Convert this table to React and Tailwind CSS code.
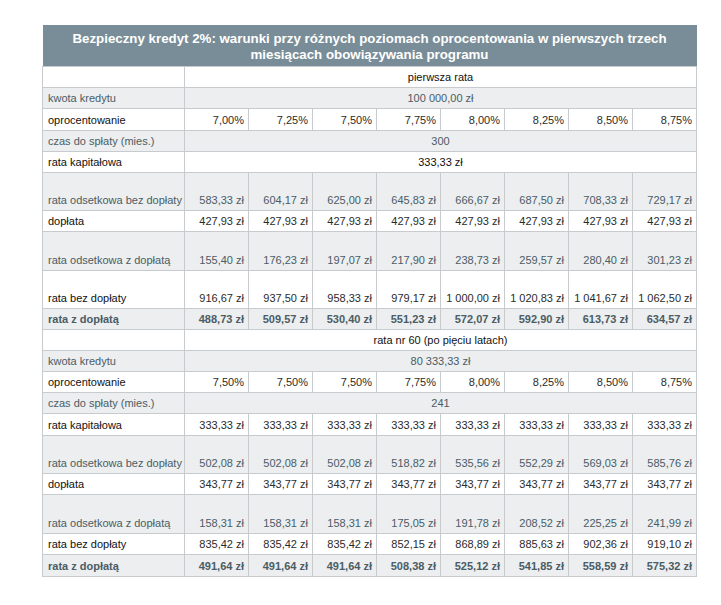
import React from "react";

const zl = (arr) => arr.map((v) => `${v} zł`);

const sections = [
  {
    heading: "pierwsza rata",
    rows: [
      { label: "kwota kredytu", shade: true, merged: "100 000,00 zł", h: "h-[21px]" },
      { label: "oprocentowanie", values: ["7,00%", "7,25%", "7,50%", "7,75%", "8,00%", "8,25%", "8,50%", "8,75%"], h: "h-[22px]" },
      { label: "czas do spłaty (mies.)", shade: true, merged: "300", h: "h-[21px]" },
      { label: "rata kapitałowa", merged: "333,33 zł", h: "h-[21px]" },
      { label: "rata odsetkowa bez dopłaty", shade: true, values: zl(["583,33", "604,17", "625,00", "645,83", "666,67", "687,50", "708,33", "729,17"]), h: "h-[38px]" },
      { label: "dopłata", values: zl(Array(8).fill("427,93")), h: "h-[21px]" },
      { label: "rata odsetkowa z dopłatą", shade: true, values: zl(["155,40", "176,23", "197,07", "217,90", "238,73", "259,57", "280,40", "301,23"]), h: "h-[39px]" },
      { label: "rata bez dopłaty", values: zl(["916,67", "937,50", "958,33", "979,17", "1 000,00", "1 020,83", "1 041,67", "1 062,50"]), h: "h-[38px]" },
      { label: "rata z dopłatą", shade: true, bold: true, values: zl(["488,73", "509,57", "530,40", "551,23", "572,07", "592,90", "613,73", "634,57"]), h: "h-[21px]" },
    ],
  },
  {
    heading: "rata nr 60 (po pięciu latach)",
    rows: [
      { label: "kwota kredytu", shade: true, merged: "80 333,33 zł", h: "h-[21px]" },
      { label: "oprocentowanie", values: ["7,50%", "7,50%", "7,50%", "7,75%", "8,00%", "8,25%", "8,50%", "8,75%"], h: "h-[21px]" },
      { label: "czas do spłaty (mies.)", shade: true, merged: "241", h: "h-[21px]" },
      { label: "rata kapitałowa", values: zl(Array(8).fill("333,33")), h: "h-[22px]" },
      { label: "rata odsetkowa bez dopłaty", shade: true, values: zl(["502,08", "502,08", "502,08", "518,82", "535,56", "552,29", "569,03", "585,76"]), h: "h-[38px]" },
      { label: "dopłata", values: zl(Array(8).fill("343,77")), h: "h-[21px]" },
      { label: "rata odsetkowa z dopłatą", shade: true, values: zl(["158,31", "158,31", "158,31", "175,05", "191,78", "208,52", "225,25", "241,99"]), h: "h-[39px]" },
      { label: "rata bez dopłaty", values: zl(["835,42", "835,42", "835,42", "852,15", "868,89", "885,63", "902,36", "919,10"]), h: "h-[21px]" },
      { label: "rata z dopłatą", shade: true, bold: true, values: zl(["491,64", "491,64", "491,64", "508,38", "525,12", "541,85", "558,59", "575,32"]), h: "h-[22px]" },
    ],
  },
];

function Row({ row }) {
  const bg = row.shade ? "bg-[#eceef0] text-[#4b5c64]" : "bg-white text-[#111]";
  const weight = row.bold ? "font-bold" : "";
  return (
    <tr className={`${row.h} ${bg} ${weight}`}>
      <td className="border border-[#c8cbcd] pl-[5px] pb-[3px] align-bottom whitespace-nowrap">{row.label}</td>
      {row.merged ? (
        <td colSpan={8} className="border border-[#c8cbcd] pb-[3px] align-bottom text-center">
          {row.merged}
        </td>
      ) : (
        row.values.map((v, i) => (
          <td
            key={i}
            className={`border border-[#c8cbcd] pr-[4px] pb-[3px] align-bottom text-right whitespace-nowrap ${row.shade ? "" : "text-[#2b2b2b]"}`}
          >
            {v}
          </td>
        ))
      )}
    </tr>
  );
}

export default function App() {
  return (
    <div className="min-h-[605px] bg-white pt-[25px] pl-[42px] font-['Liberation_Sans',Arial,sans-serif] text-[11px] leading-[13px]">
      <table className="w-[654px] table-fixed border-collapse">
        <colgroup>
          <col className="w-[142px]" />
          {Array.from({ length: 8 }).map((_, i) => (
            <col key={i} className="w-[64px]" />
          ))}
        </colgroup>
        <tbody>
          <tr className="h-[41px]">
            <td colSpan={9} className="bg-[#788d97] px-4 pt-[4px] text-center text-[13.3px] font-bold leading-[16px] text-white">
              Bezpieczny kredyt 2%: warunki przy różnych poziomach oprocentowania w pierwszych trzech
              <br />
              miesiącach obowiązywania programu
            </td>
          </tr>
          {sections.map((s) => (
            <React.Fragment key={s.heading}>
              <tr className="h-[21px] bg-white text-[#111]">
                <td className="border border-[#c8cbcd]"></td>
                <td colSpan={8} className="border border-[#c8cbcd] pb-[3px] align-bottom text-center">
                  {s.heading}
                </td>
              </tr>
              {s.rows.map((r) => (
                <Row key={r.label} row={r} />
              ))}
            </React.Fragment>
          ))}
        </tbody>
      </table>
    </div>
  );
}
